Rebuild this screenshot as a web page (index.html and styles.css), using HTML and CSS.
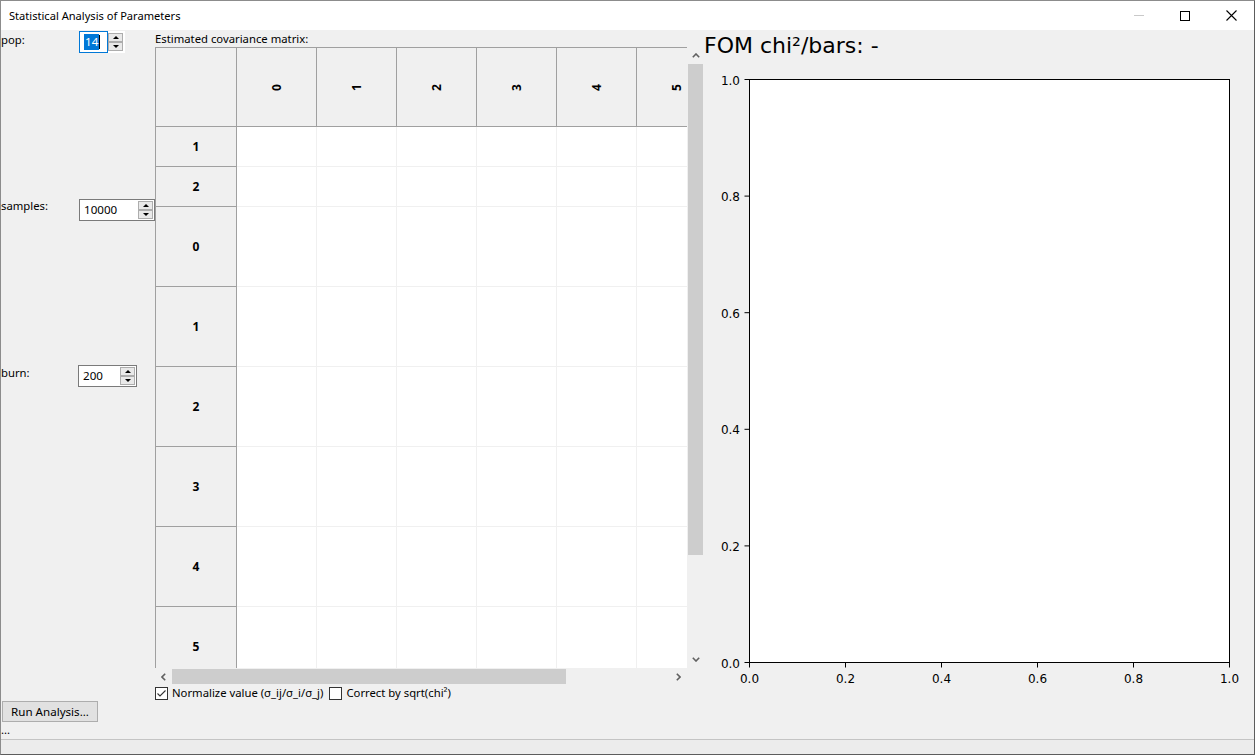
FILE: index.html
```html
<!DOCTYPE html>
<html>
<head>
<meta charset="utf-8">
<title>Statistical Analysis of Parameters</title>
<link rel="stylesheet" href="styles.css">
</head>
<body>
<div class="window">
  <div class="titlebar">
    <span class="title">Statistical Analysis of Parameters</span>
    <div class="caption-btns">
      <div class="cbtn"><svg width="10" height="1" viewBox="0 0 10 1"><rect width="10" height="1" fill="#c9c9c9"/></svg></div>
      <div class="cbtn"><svg width="10" height="10" viewBox="0 0 10 10"><rect x="0.5" y="0.5" width="9" height="9" fill="none" stroke="#000" stroke-width="1"/></svg></div>
      <div class="cbtn"><svg width="11" height="11" viewBox="0 0 11 11"><path d="M0.5 0.5L10.5 10.5M10.5 0.5L0.5 10.5" stroke="#000" stroke-width="1.1" fill="none"/></svg></div>
    </div>
  </div>
  <div class="client">
    <div class="left">
      <div class="top">
        <div class="controls">
          <div class="field f-pop">
            <span class="flabel">pop:</span>
            <div class="spin w-pop focused">
              <div class="sbox"><span class="sel">14</span><span class="caret"></span></div>
              <div class="sarrows"><span class="sbtn"><i class="tri-up"></i></span><span class="sbtn"><i class="tri-down"></i></span></div>
            </div>
          </div>
          <div class="field f-samples">
            <span class="flabel">samples:</span>
            <div class="spin w-samples">
              <div class="sbox"><span>10000</span></div>
              <div class="sarrows"><span class="sbtn"><i class="tri-up"></i></span><span class="sbtn"><i class="tri-down"></i></span></div>
            </div>
          </div>
          <div class="field f-burn">
            <span class="flabel">burn:</span>
            <div class="spin w-burn">
              <div class="sbox"><span>200</span></div>
              <div class="sarrows"><span class="sbtn"><i class="tri-up"></i></span><span class="sbtn"><i class="tri-down"></i></span></div>
            </div>
          </div>
        </div>
        <div class="tablearea">
          <div class="tlabel">Estimated covariance matrix:</div>
          <div class="tv">
            <div class="tv-view">
              <div class="grid">
                <div class="hc corner"></div>
                <div class="hc col"><span class="rot">0</span></div>
                <div class="hc col"><span class="rot">1</span></div>
                <div class="hc col"><span class="rot">2</span></div>
                <div class="hc col"><span class="rot">3</span></div>
                <div class="hc col"><span class="rot">4</span></div>
                <div class="hc col"><span class="rot">5</span></div>

                <div class="hc row">1</div><div class="c"></div><div class="c"></div><div class="c"></div><div class="c"></div><div class="c"></div><div class="c"></div>
                <div class="hc row">2</div><div class="c"></div><div class="c"></div><div class="c"></div><div class="c"></div><div class="c"></div><div class="c"></div>
                <div class="hc row">0</div><div class="c"></div><div class="c"></div><div class="c"></div><div class="c"></div><div class="c"></div><div class="c"></div>
                <div class="hc row">1</div><div class="c"></div><div class="c"></div><div class="c"></div><div class="c"></div><div class="c"></div><div class="c"></div>
                <div class="hc row">2</div><div class="c"></div><div class="c"></div><div class="c"></div><div class="c"></div><div class="c"></div><div class="c"></div>
                <div class="hc row">3</div><div class="c"></div><div class="c"></div><div class="c"></div><div class="c"></div><div class="c"></div><div class="c"></div>
                <div class="hc row">4</div><div class="c"></div><div class="c"></div><div class="c"></div><div class="c"></div><div class="c"></div><div class="c"></div>
                <div class="hc row">5</div><div class="c"></div><div class="c"></div><div class="c"></div><div class="c"></div><div class="c"></div><div class="c"></div>
              </div>
            </div>
            <div class="vscroll">
              <div class="sb-btn"><svg width="8" height="5" viewBox="0 0 8 5"><polyline points="0.8,4.2 4,1 7.2,4.2" fill="none" stroke="#606060" stroke-width="1.6"/></svg></div>
              <div class="sb-track v"><div class="thumb-v"></div></div>
              <div class="sb-btn"><svg width="8" height="5" viewBox="0 0 8 5"><polyline points="0.8,0.8 4,4 7.2,0.8" fill="none" stroke="#606060" stroke-width="1.6"/></svg></div>
            </div>
            <div class="hscroll">
              <div class="sb-btn"><svg width="5" height="8" viewBox="0 0 5 8"><polyline points="4.2,0.8 1,4 4.2,7.2" fill="none" stroke="#606060" stroke-width="1.6"/></svg></div>
              <div class="sb-track h"><div class="thumb-h"></div></div>
              <div class="sb-btn"><svg width="5" height="8" viewBox="0 0 5 8"><polyline points="0.8,0.8 4,4 0.8,7.2" fill="none" stroke="#606060" stroke-width="1.6"/></svg></div>
            </div>
            <div class="sb-corner"></div>
          </div>
        </div>
      </div>
      <div class="checks">
        <label class="chk"><span class="box"><svg width="11" height="11" viewBox="0 0 11 11"><polyline points="1.5,5.5 4,8 9.5,2.5" fill="none" stroke="#333" stroke-width="1.1"/></svg></span><span>Normalize value (σ_ij/σ_i/σ_j)</span></label>
        <label class="chk"><span class="box"></span><span>Correct by sqrt(chi²)</span></label>
      </div>
      <div class="btnrow"><button class="pbtn">Run Analysis...</button></div>
      <div class="dots">...</div>
    </div>
    <div class="figure">
      <svg class="plot" width="550" height="709" viewBox="0 0 550 709">
        <text class="ptitle" x="0" y="23">FOM chi²/bars: -</text>
        <rect x="45.5" y="49.5" width="480" height="583" fill="#fff" stroke="#000" stroke-width="1"/>
        <g stroke="#000" stroke-width="1">
          <line x1="40.5" y1="49.5" x2="45.5" y2="49.5"/>
          <line x1="40.5" y1="166.1" x2="45.5" y2="166.1"/>
          <line x1="40.5" y1="282.7" x2="45.5" y2="282.7"/>
          <line x1="40.5" y1="399.3" x2="45.5" y2="399.3"/>
          <line x1="40.5" y1="515.9" x2="45.5" y2="515.9"/>
          <line x1="40.5" y1="632.5" x2="45.5" y2="632.5"/>
          <line x1="45.5" y1="632.5" x2="45.5" y2="637.5"/>
          <line x1="141.5" y1="632.5" x2="141.5" y2="637.5"/>
          <line x1="237.5" y1="632.5" x2="237.5" y2="637.5"/>
          <line x1="333.5" y1="632.5" x2="333.5" y2="637.5"/>
          <line x1="429.5" y1="632.5" x2="429.5" y2="637.5"/>
          <line x1="525.5" y1="632.5" x2="525.5" y2="637.5"/>
        </g>
        <g class="ytl">
          <text x="36" y="54.5">1.0</text>
          <text x="36" y="171">0.8</text>
          <text x="36" y="287.5">0.6</text>
          <text x="36" y="404">0.4</text>
          <text x="36" y="521">0.2</text>
          <text x="36" y="637.5">0.0</text>
        </g>
        <g class="xtl">
          <text x="45.5" y="653">0.0</text>
          <text x="141.5" y="653">0.2</text>
          <text x="237.5" y="653">0.4</text>
          <text x="333.5" y="653">0.6</text>
          <text x="429.5" y="653">0.8</text>
          <text x="525.5" y="653">1.0</text>
        </g>
      </svg>
    </div>
  </div>
  <div class="status"></div>
</div>
</body>
</html>
```

FILE: styles.css
```css
* { box-sizing: border-box; }
html, body { margin: 0; padding: 0; }
body {
  font-family: "Noto Sans", "Open Sans", sans-serif;
  font-size: 11.3px;
  color: #000;
  background: #f0f0f0;
}
.window {
  width: 1255px;
  height: 755px;
  display: flex;
  flex-direction: column;
  border: 1px solid #8c8c8c;
  border-right-color: #5c5c5c;
  border-bottom-color: #5c5c5c;
  overflow: hidden;
}
.titlebar {
  height: 29px;
  flex: none;
  background: #fff;
  display: flex;
  align-items: center;
}
.title {
  padding-left: 8px;
  line-height: 16px;
  margin-top: 1px;
  flex: 1;
  font-size: 11.1px;
}
.caption-btns { display: flex; height: 29px; }
.cbtn {
  width: 46px;
  height: 29px;
  display: flex;
  align-items: center;
  justify-content: center;
}
.client {
  height: 709px;
  flex: none;
  display: flex;
  background: #f0f0f0;
}
.left {
  width: 703px;
  flex: none;
  display: flex;
  flex-direction: column;
}
.top { display: flex; height: 655px; }
.controls {
  width: 154px;
  flex: none;
  display: flex;
  flex-direction: column;
}
.field { display: flex; align-items: flex-start; height: 22px; }
.f-pop { margin-top: 1px; }
.f-samples { margin-top: 146px; }
.f-burn { margin-top: 144px; }
.flabel {
  width: 78px;
  flex: none;
  line-height: 16px;
  margin-top: 1px;
}
.f-samples .flabel { margin-top: -1px; }
.f-burn .flabel { margin-top: 0; }
.f-burn .spin { margin-left: -1px; }
.spin { display: flex; height: 22px; }
.w-pop { width: 46px; }
.w-samples { width: 76px; }
.w-burn { width: 59px; }
.sbox {
  flex: 1;
  background: #fff;
  border: 1px solid #7a7a7a;
  border-right: none;
  padding-left: 4px;
  display: flex;
  align-items: center;
  line-height: 16px;
  font-size: 11.6px;
}
.focused .sbox { border: 1px solid #0078d7; padding-left: 4px; }
.sel { background: #0078d7; color: #fff; padding: 0 1px; }
.caret { display: inline-block; width: 1px; height: 14px; background: #000; }
.sarrows {
  width: 17px;
  flex: none;
  display: flex;
  flex-direction: column;
  border: 1px solid #7a7a7a;
  border-left: none;
  background: #fff;
  padding: 1px 1px 1px 0;
}
.focused .sarrows { border-color: #fff; }
.sbtn {
  flex: 1;
  border: 1px solid #adadad;
  background: #e9e9e9;
  display: flex;
  align-items: center;
  justify-content: center;
}
.tri-up {
  width: 0; height: 0;
  border-left: 3px solid transparent;
  border-right: 3px solid transparent;
  border-bottom: 3px solid #000;
}
.tri-down {
  width: 0; height: 0;
  border-left: 3px solid transparent;
  border-right: 3px solid transparent;
  border-top: 3px solid #000;
}
.tablearea {
  width: 549px;
  flex: none;
  display: flex;
  flex-direction: column;
}
.tlabel { height: 17px; line-height: 17px; }
.tv {
  display: grid;
  grid-template-columns: 532px 17px;
  grid-template-rows: 621px 17px;
}
.tv-view {
  overflow: hidden;
  background: #fff;
  border-left: 1px solid #a0a0a0;
  border-top: 1px solid #a0a0a0;
}
.grid {
  display: grid;
  grid-template-columns: 81px repeat(6, 80px);
  grid-template-rows: 79px 40px 40px repeat(6, 80px);
  width: 561px;
}
.hc {
  background: #f0f0f0;
  border-right: 1px solid #a0a0a0;
  border-bottom: 1px solid #a0a0a0;
  display: flex;
  align-items: center;
  justify-content: center;
  font-weight: 700;
  font-size: 12px;
}
.rot { display: inline-block; transform: rotate(-90deg); }
.c {
  background: #fff;
  border-right: 1px solid #f0f0f0;
  border-bottom: 1px solid #f0f0f0;
}
.vscroll {
  display: flex;
  flex-direction: column;
  background: #f0f0f0;
}
.hscroll {
  display: flex;
  background: #f0f0f0;
}
.sb-btn {
  width: 17px;
  height: 17px;
  flex: none;
  display: flex;
  align-items: center;
  justify-content: center;
}
.sb-track { flex: 1; display: flex; }
.sb-track.v { flex-direction: column; }
.thumb-v { height: 491px; margin: 0 1px; background: #cdcdcd; }
.thumb-h { width: 394px; margin: 1px 0; background: #cdcdcd; }
.sb-corner { background: #f0f0f0; }
.checks {
  height: 16px;
  padding-left: 154px;
  display: flex;
  align-items: center;
  gap: 6px;
}
.chk { display: flex; align-items: center; gap: 4px; line-height: 16px; }
.box {
  width: 13px;
  height: 13px;
  border: 1px solid #333;
  background: #fff;
  display: flex;
  align-items: center;
  justify-content: center;
}
.btnrow { height: 21px; padding-left: 1px; }
.pbtn {
  width: 96px;
  height: 21px;
  font-family: inherit;
  font-size: 11.6px;
  color: #000;
  background: #e1e1e1;
  border: 1px solid #adadad;
  padding: 0;
  line-height: 17px;
}
.dots { height: 17px; line-height: 14px; padding-top: 1px; }
.figure { width: 550px; flex: none; }
.plot { display: block; font-family: "DejaVu Sans", sans-serif; }
.ptitle { font-size: 22px; fill: #000; }
.ytl text { font-size: 12px; text-anchor: end; fill: #000; }
.xtl text { font-size: 12px; text-anchor: middle; fill: #000; }
.status {
  flex: 1;
  border-top: 1px solid #c4c4c4;
  background: #ececec;
}
```
